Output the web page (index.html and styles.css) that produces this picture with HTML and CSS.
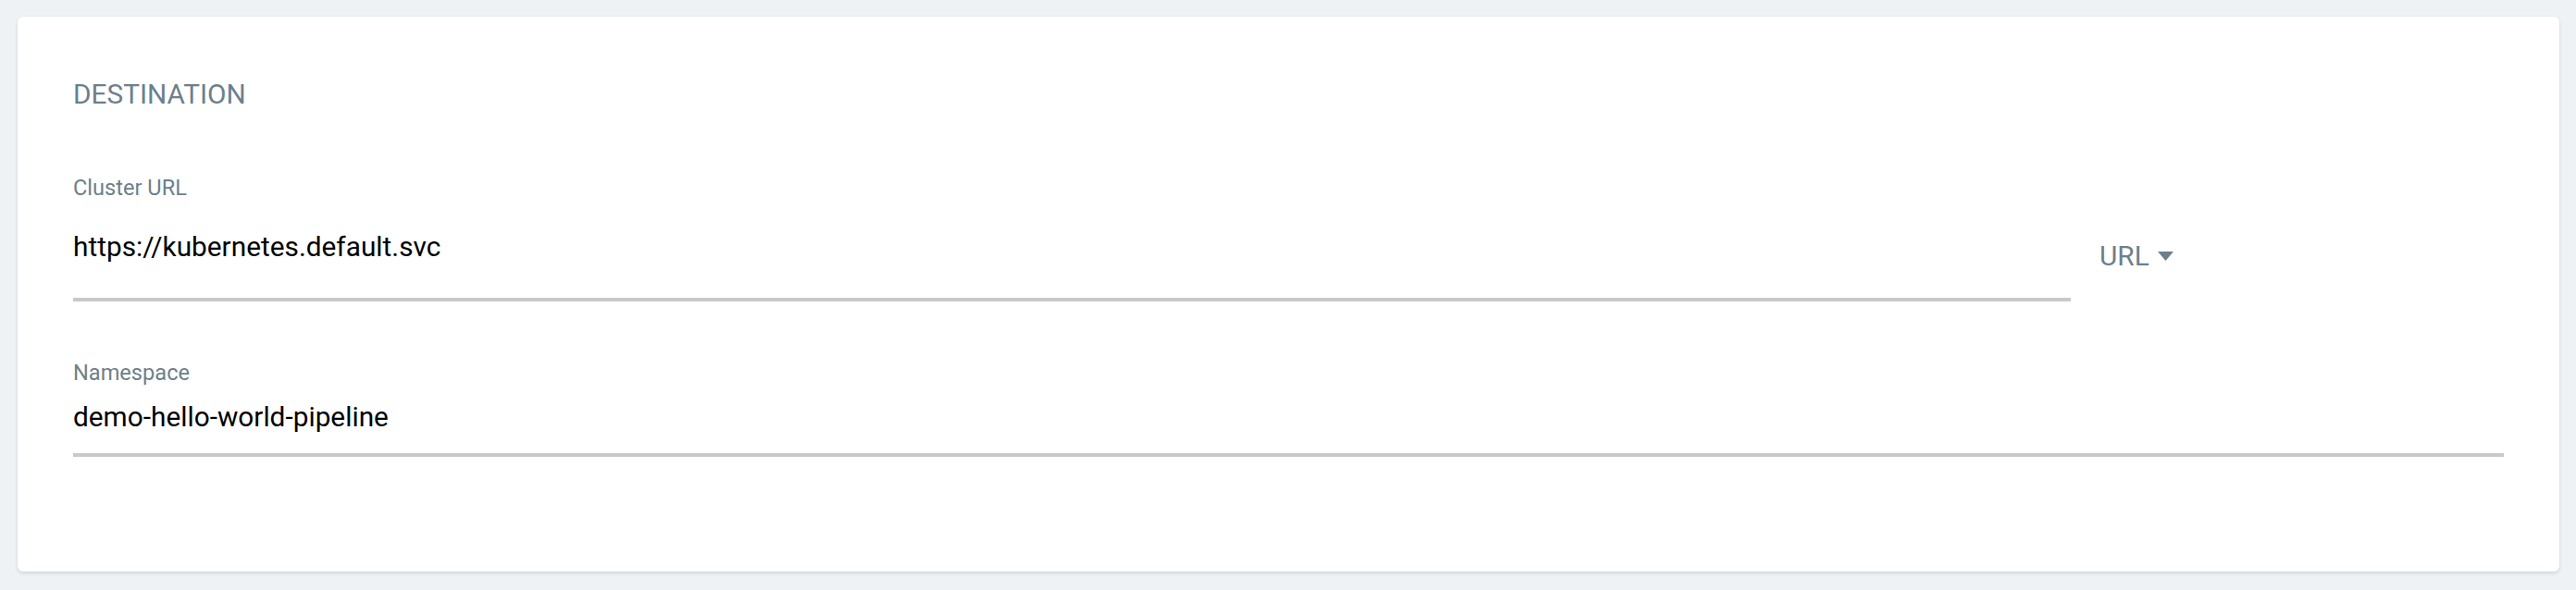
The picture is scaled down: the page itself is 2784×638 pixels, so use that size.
FILE: index.html
```html
<!DOCTYPE html>
<html lang="en">
<head>
<meta charset="utf-8">
<title>Destination</title>
<link rel="stylesheet" href="styles.css">
</head>
<body>
  <section class="card">
    <h2 class="card__title">DESTINATION</h2>
    <div class="row row--cluster">
      <div class="field field--cluster">
        <label class="field__label">Cluster URL</label>
        <div class="field__value field__value--cluster">https://kubernetes.default.svc</div>
      </div>
      <div class="selector">
        <span class="selector__text">URL</span>
        <svg class="selector__caret" viewBox="0 0 17 10" width="17" height="10" aria-hidden="true">
          <path d="M0 0 H17 L8.5 10 Z" fill="#6d7f8b"/>
        </svg>
      </div>
    </div>
    <div class="row row--namespace">
      <div class="field field--namespace">
        <label class="field__label">Namespace</label>
        <div class="field__value field__value--namespace">demo-hello-world-pipeline</div>
      </div>
    </div>
  </section>
</body>
</html>
```

FILE: styles.css
```css
html, body {
  margin: 0;
  padding: 0;
}

body {
  background: #eef2f5;
  padding: 18px 18px 20px 19px;
  font-family: Roboto, "Liberation Sans", Arial, sans-serif;
}

.card {
  box-sizing: border-box;
  height: 600px;
  background: #ffffff;
  border-radius: 6px;
  box-shadow: 0 2px 4px rgba(0, 0, 0, 0.12), 0 0 1px rgba(0, 0, 0, 0.06);
  padding: 66px 60px 0 60px;
}

.card__title {
  margin: 0;
  font-size: 29.8px;
  line-height: 36px;
  font-weight: 400;
  color: #6d7f8b;
  letter-spacing: 0;
}

.row {
  display: flex;
  align-items: flex-start;
}

.row--cluster {
  margin-top: 70px;
}

.row--namespace {
  margin-top: 64px;
}

.field {
  flex: 1 1 auto;
  min-width: 0;
}

.field__label {
  display: block;
  font-size: 23.6px;
  line-height: 26px;
  color: #6d7f8b;
}

.field__value {
  font-size: 29.8px;
  line-height: 36px;
  color: #000;
  border-bottom: 4px solid #c9c9c9;
}

.field__value--cluster {
  margin-top: 33px;
  padding-bottom: 37px;
}

.field__value--namespace {
  margin-top: 17px;
  padding-bottom: 21px;
}

.selector {
  flex: 0 0 468px;
  box-sizing: border-box;
  padding-left: 31px;
  margin-top: 69px;
  font-size: 29.8px;
  line-height: 36px;
  color: #6d7f8b;
  display: flex;
  align-items: baseline;
}

.selector__caret {
  margin-left: 9px;
  align-self: flex-start;
  margin-top: 13px;
}
```
